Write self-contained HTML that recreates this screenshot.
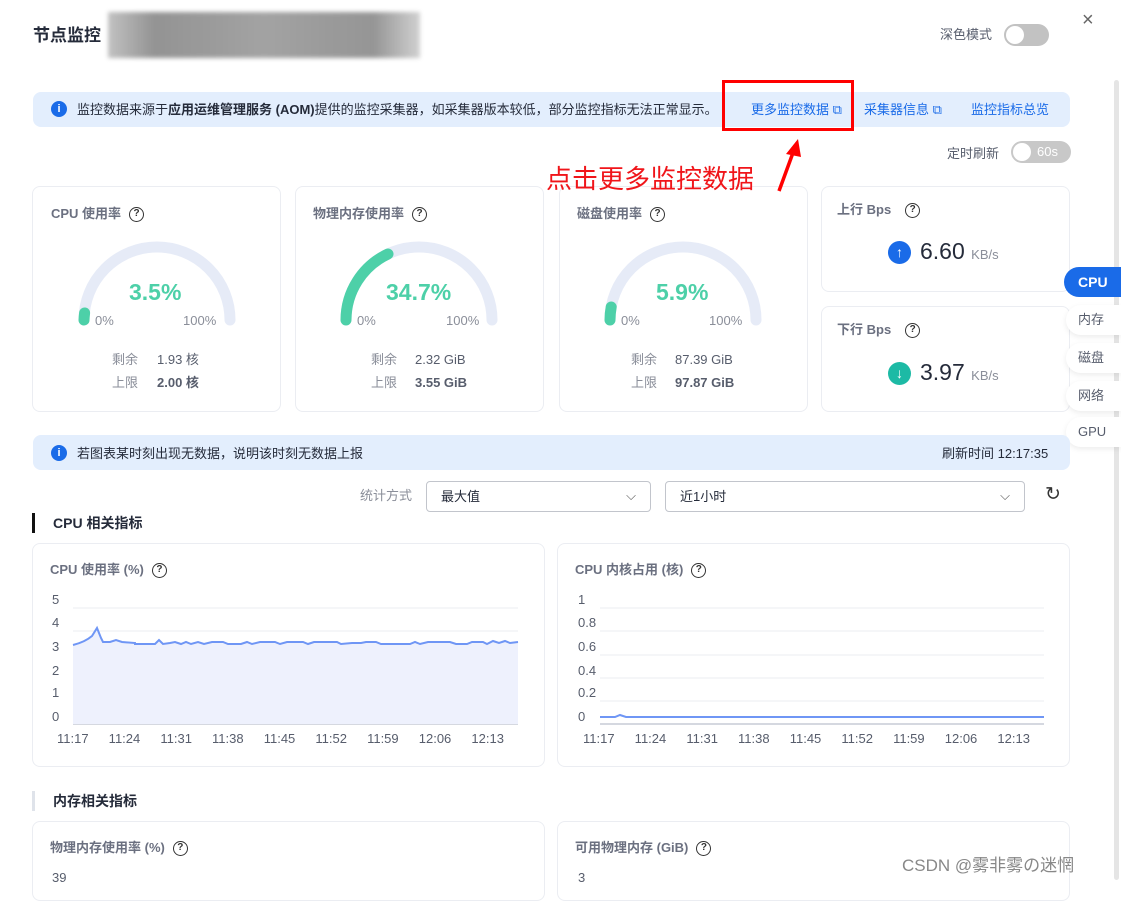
<!DOCTYPE html><html><head><meta charset="utf-8"><style>
*{margin:0;padding:0;box-sizing:border-box}
html,body{width:1121px;height:886px}
body{background:#fff;font-family:"Liberation Sans","Noto Sans CJK SC",sans-serif;position:relative;overflow:hidden;color:#252b3a}
.a{position:absolute;white-space:nowrap;line-height:1.2}
.card{position:absolute;border:1px solid #ebedf2;border-radius:8px;background:#fff}
.q{display:inline-block;width:15px;height:15px;border:1.5px solid #333;border-radius:50%;font-size:10px;text-align:center;line-height:12px;font-weight:bold;color:#333;vertical-align:middle;margin-left:8px}
.t{font-size:13px;color:#6b7080;font-weight:bold}
.g{font-size:13px;color:#8a8e99}
.v{font-size:13px;color:#575d6c}
.tab{position:absolute;left:1066px;width:55px;height:30px;font-size:13px;color:#575d6c;padding-left:12px;line-height:30px;background:#fff;border-radius:15px 0 0 15px;box-shadow:0 2px 6px rgba(0,0,0,.08)}
.ax{font-size:13px;color:#575d6c}
</style></head><body>
<div class="a" style="left:33px;top:26px;font-size:17px;font-weight:bold;color:#252b3a">节点监控</div>
<div class="a" style="left:108px;top:12px;width:312px;height:46px;background:linear-gradient(90deg,#bbb,#888 15%,#999 50%,#8a8a8a 85%,#ccc);filter:blur(2px);opacity:.9"></div>
<div class="a" style="left:940px;top:27px;font-size:13px;color:#575d6c">深色模式</div>
<div class="a" style="left:1004px;top:24px;width:45px;height:22px;border-radius:11px;background:#c2c2c2"></div>
<div class="a" style="left:1006px;top:26px;width:18px;height:18px;border-radius:50%;background:#fff"></div>
<div class="a" style="left:1082px;top:8px;font-size:20px;color:#666">×</div>
<div class="a" style="left:1114px;top:80px;width:5px;height:800px;background:#e5e5e5;border-radius:3px"></div>

<div class="a" style="left:33px;top:92px;width:1037px;height:35px;background:#e3eefd;border-radius:8px"></div>
<div class="a" style="left:51px;top:101px;width:16px;height:16px;border-radius:50%;background:#1a6be8;color:#fff;font-size:11px;text-align:center;line-height:16px;font-weight:bold">i</div>
<div class="a" style="left:77px;top:102px;font-size:13px;color:#252b3a">监控数据来源于<b>应用运维管理服务 (AOM)</b>提供的监控采集器，如采集器版本较低，部分监控指标无法正常显示。</div>
<div class="a" style="left:751px;top:102px;font-size:13px;color:#1a6be8">更多监控数据 ⧉</div>
<div class="a" style="left:864px;top:102px;font-size:13px;color:#1a6be8">采集器信息 ⧉</div>
<div class="a" style="left:971px;top:102px;font-size:13px;color:#1a6be8">监控指标总览</div>
<div class="a" style="left:722px;top:80px;width:132px;height:51px;border:3px solid #f00"></div>

<div class="a" style="left:947px;top:146px;font-size:13px;color:#575d6c">定时刷新</div>
<div class="a" style="left:1011px;top:141px;width:60px;height:22px;border-radius:11px;background:#c8c8c8;color:#fff;font-size:13px;line-height:22px;padding-left:26px">60s</div>
<div class="a" style="left:1013px;top:143px;width:18px;height:18px;border-radius:50%;background:#fff"></div>

<!-- gauge cards -->
<div class="card" style="left:32px;top:186px;width:249px;height:226px"></div>
<div class="card" style="left:295px;top:186px;width:249px;height:226px"></div>
<div class="card" style="left:559px;top:186px;width:249px;height:226px"></div>
<div class="a" style="left:546px;top:164px;font-size:26px;color:#f0151a;z-index:5">点击更多监控数据</div>
<svg class="a" style="left:770px;top:135px;z-index:5" width="35" height="60"><line x1="9" y1="56" x2="24" y2="15" stroke="#f00" stroke-width="3.5"/><polygon points="28,4 16,19 31,22" fill="#f00"/></svg>
<div class="a t" style="left:51px;top:206px">CPU 使用率<span class="q">?</span></div>
<div class="a t" style="left:313px;top:206px">物理内存使用率<span class="q">?</span></div>
<div class="a t" style="left:577px;top:206px">磁盘使用率<span class="q">?</span></div>
<svg class="a" style="left:0;top:0" width="820" height="420">
<g fill="none" stroke-width="11" stroke-linecap="round">
<path d="M84 320 A73 73 0 0 1 230 320" stroke="#e6ebf7"/>
<path d="M84 320 A73 73 0 0 1 84.6 313" stroke="#4dd0a8"/>
<path d="M346 320 A73 73 0 0 1 492 320" stroke="#e6ebf7"/>
<path d="M346 320 A73 73 0 0 1 388 254" stroke="#4dd0a8"/>
<path d="M610 320 A73 73 0 0 1 756 320" stroke="#e6ebf7"/>
<path d="M610 320 A73 73 0 0 1 611.2 307" stroke="#4dd0a8"/>
</g></svg>
<div class="a" style="left:129px;top:279px;font-size:23px;font-weight:bold;color:#4dd0a8">3.5%</div>
<div class="a" style="left:386px;top:279px;font-size:23px;font-weight:bold;color:#4dd0a8">34.7%</div>
<div class="a" style="left:656px;top:279px;font-size:23px;font-weight:bold;color:#4dd0a8">5.9%</div>
<div class="a g" style="left:95px;top:313px">0%</div><div class="a g" style="left:183px;top:313px">100%</div>
<div class="a g" style="left:357px;top:313px">0%</div><div class="a g" style="left:446px;top:313px">100%</div>
<div class="a g" style="left:621px;top:313px">0%</div><div class="a g" style="left:709px;top:313px">100%</div>
<div class="a g" style="left:112px;top:352px">剩余</div><div class="a v" style="left:157px;top:352px">1.93 核</div>
<div class="a g" style="left:112px;top:375px">上限</div><div class="a v" style="left:157px;top:375px;font-weight:bold">2.00 核</div>
<div class="a g" style="left:371px;top:352px">剩余</div><div class="a v" style="left:415px;top:352px">2.32 GiB</div>
<div class="a g" style="left:371px;top:375px">上限</div><div class="a v" style="left:415px;top:375px;font-weight:bold">3.55 GiB</div>
<div class="a g" style="left:631px;top:352px">剩余</div><div class="a v" style="left:675px;top:352px">87.39 GiB</div>
<div class="a g" style="left:631px;top:375px">上限</div><div class="a v" style="left:675px;top:375px;font-weight:bold">97.87 GiB</div>

<div class="card" style="left:821px;top:186px;width:249px;height:106px"></div>
<div class="card" style="left:821px;top:306px;width:249px;height:106px"></div>
<div class="a t" style="left:837px;top:202px">上行 Bps<span class="q" style="margin-left:14px">?</span></div>
<div class="a t" style="left:837px;top:322px">下行 Bps<span class="q" style="margin-left:14px">?</span></div>
<div class="a" style="left:888px;top:241px;width:23px;height:23px;border-radius:50%;background:#1a6be8;color:#fff;font-size:14px;text-align:center;line-height:23px;font-weight:bold">↑</div>
<div class="a" style="left:920px;top:238px;font-size:23px;color:#252b3a">6.60 <span style="font-size:13px;color:#8a8e99">KB/s</span></div>
<div class="a" style="left:888px;top:362px;width:23px;height:23px;border-radius:50%;background:#1dbaa5;color:#fff;font-size:14px;text-align:center;line-height:23px;font-weight:bold">↓</div>
<div class="a" style="left:920px;top:359px;font-size:23px;color:#252b3a">3.97 <span style="font-size:13px;color:#8a8e99">KB/s</span></div>

<div class="a" style="left:1064px;top:267px;width:57px;height:30px;background:#1a6be8;border-radius:15px 0 0 15px;color:#fff;font-size:14px;font-weight:bold;line-height:30px;padding-left:14px">CPU</div>
<div class="tab" style="top:305px">内存</div>
<div class="tab" style="top:343px">磁盘</div>
<div class="tab" style="top:381px">网络</div>
<div class="tab" style="top:417px">GPU</div>

<div class="a" style="left:33px;top:435px;width:1037px;height:35px;background:#e3eefd;border-radius:8px"></div>
<div class="a" style="left:51px;top:445px;width:16px;height:16px;border-radius:50%;background:#1a6be8;color:#fff;font-size:11px;text-align:center;line-height:16px;font-weight:bold">i</div>
<div class="a" style="left:77px;top:446px;font-size:13px;color:#252b3a">若图表某时刻出现无数据，说明该时刻无数据上报</div>
<div class="a" style="left:942px;top:446px;font-size:13px;color:#252b3a">刷新时间 12:17:35</div>

<div class="a" style="left:360px;top:488px;font-size:13px;color:#8a8e99">统计方式</div>
<div class="a" style="left:426px;top:481px;width:225px;height:31px;border:1px solid #c2c5cc;border-radius:4px;font-size:13px;line-height:29px;padding-left:14px">最大值<span style="position:absolute;right:14px;top:-1px;color:#555">⌵</span></div>
<div class="a" style="left:665px;top:481px;width:360px;height:31px;border:1px solid #c2c5cc;border-radius:4px;font-size:13px;line-height:29px;padding-left:14px">近1小时<span style="position:absolute;right:14px;top:-1px;color:#555">⌵</span></div>
<div class="a" style="left:1045px;top:484px;font-size:19px;color:#333">↻</div>

<div class="a" style="left:32px;top:513px;width:3px;height:20px;background:#111"></div>
<div class="a" style="left:53px;top:515px;font-size:14px;font-weight:bold">CPU 相关指标</div>

<div class="card" style="left:32px;top:543px;width:513px;height:224px"></div>
<div class="card" style="left:557px;top:543px;width:513px;height:224px"></div>
<div class="a t" style="left:50px;top:562px">CPU 使用率 (%)<span class="q">?</span></div>
<div class="a t" style="left:575px;top:562px">CPU 内核占用 (核)<span class="q">?</span></div>
<svg class="a" style="left:0;top:580px" width="1121" height="180">
<g stroke="#ebedf2" stroke-width="1">
<line x1="73" x2="518" y1="28" y2="28"/><line x1="73" x2="518" y1="51" y2="51"/><line x1="73" x2="518" y1="75" y2="75"/><line x1="73" x2="518" y1="98" y2="98"/><line x1="73" x2="518" y1="121" y2="121"/>
<line x1="600" x2="1044" y1="28" y2="28"/><line x1="600" x2="1044" y1="51" y2="51"/><line x1="600" x2="1044" y1="75" y2="75"/><line x1="600" x2="1044" y1="98" y2="98"/><line x1="600" x2="1044" y1="121" y2="121"/>
</g>
<line x1="73" x2="518" y1="144" y2="144" stroke="#d5d8e0" stroke-width="2"/>
<line x1="600" x2="1044" y1="144" y2="144" stroke="#d5d8e0" stroke-width="2"/>
<path d="M73 65 Q85 62 92 56 L97 48 L101 58 L103 62 L110 62 L116 60 L122 62 L135 63 L135 64 L155 64 L159 60 L163 64 L170 63 L175 62 L181 64 L186 62 L191 64 L198 62 L204 64 L212 62 L223 62 L228 64 L241 64 L247 62 L252 64 L260 62 L275 62 L280 64 L287 62 L303 62 L308 64 L314 62 L337 62 L341 64 L352 63 L361 63 L366 62 L376 62 L381 64 L410 64 L415 62 L420 64 L428 62 L450 62 L456 64 L467 64 L472 62 L483 62 L487 64 L493 61 L499 63 L505 61 L510 63 L518 62 L518 144 L73 144 Z" fill="#eef1fd"/>
<path d="M73 65 Q85 62 92 56 L97 48 L101 58 L103 62 L110 62 L116 60 L122 62 L135 63 L135 64 L155 64 L159 60 L163 64 L170 63 L175 62 L181 64 L186 62 L191 64 L198 62 L204 64 L212 62 L223 62 L228 64 L241 64 L247 62 L252 64 L260 62 L275 62 L280 64 L287 62 L303 62 L308 64 L314 62 L337 62 L341 64 L352 63 L361 63 L366 62 L376 62 L381 64 L410 64 L415 62 L420 64 L428 62 L450 62 L456 64 L467 64 L472 62 L483 62 L487 64 L493 61 L499 63 L505 61 L510 63 L518 62" fill="none" stroke="#6f96f5" stroke-width="2"/>
<path d="M600 137 L615 137 L620 135 L626 137 L1044 137" fill="none" stroke="#6f96f5" stroke-width="2"/>
</svg>
<div class="a ax" style="left:52px;top:592px">5</div><div class="a ax" style="left:52px;top:615px">4</div><div class="a ax" style="left:52px;top:639px">3</div><div class="a ax" style="left:52px;top:663px">2</div><div class="a ax" style="left:52px;top:685px">1</div><div class="a ax" style="left:52px;top:709px">0</div>
<div class="a ax" style="left:578px;top:592px">1</div><div class="a ax" style="left:578px;top:615px">0.8</div><div class="a ax" style="left:578px;top:639px">0.6</div><div class="a ax" style="left:578px;top:663px">0.4</div><div class="a ax" style="left:578px;top:685px">0.2</div><div class="a ax" style="left:578px;top:709px">0</div>
<div class="a ax" style="left:57px;top:731px;word-spacing:16.5px">11:17 11:24 11:31 11:38 11:45 11:52 11:59 12:06 12:13</div>
<div class="a ax" style="left:583px;top:731px;word-spacing:16.5px">11:17 11:24 11:31 11:38 11:45 11:52 11:59 12:06 12:13</div>

<div class="a" style="left:32px;top:791px;width:3px;height:20px;background:#dfe3ea"></div>
<div class="a" style="left:53px;top:793px;font-size:14px;font-weight:bold">内存相关指标</div>
<div class="card" style="left:32px;top:821px;width:513px;height:80px"></div>
<div class="card" style="left:557px;top:821px;width:513px;height:80px"></div>
<div class="a t" style="left:50px;top:840px">物理内存使用率 (%)<span class="q">?</span></div>
<div class="a t" style="left:575px;top:840px">可用物理内存 (GiB)<span class="q">?</span></div>
<div class="a ax" style="left:52px;top:870px">39</div>
<div class="a ax" style="left:578px;top:870px">3</div>
<div class="a" style="left:902px;top:856px;font-size:17px;color:#888">CSDN @雾非雾の迷惘</div>
</body></html>
